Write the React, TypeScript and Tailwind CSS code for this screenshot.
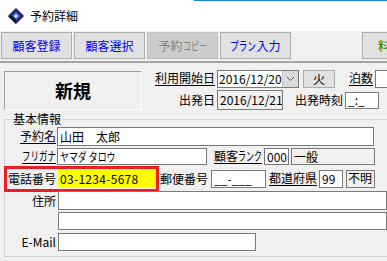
import React from "react";

const F = { fontFamily: '"Noto Sans CJK JP", "Noto Sans", sans-serif' };

function Narrow({ children, w, vw }: { children: React.ReactNode; w: number; vw: number }) {
  return (
    <span className="inline-block whitespace-nowrap origin-left" style={{ transform: `scaleX(${vw / w})`, marginRight: vw - w }}>
      {children}
    </span>
  );
}

function Btn({ children, color, disabled, extra = "" }: { children: React.ReactNode; color?: string; disabled?: boolean; extra?: string }) {
  return (
    <div
      className={`w-[71px] shrink-0 h-[27px] flex items-center justify-center text-[12px] whitespace-nowrap border ${
        disabled ? "bg-[#cccccc] border-[#bfbfbf] text-[#838383]" : "bg-[#e1e1e1] border-[#adadad]"
      } ${extra}`}
      style={color ? { color } : undefined}
    >
      {children}
    </div>
  );
}

function Label({ children, u, w, extra = "" }: { children: React.ReactNode; u?: boolean; w: string; extra?: string }) {
  return (
    <div className={`${w} shrink-0 flex justify-end whitespace-nowrap text-[12px] leading-none text-black ${extra}`}>
      <span className={u ? "border-b border-black pb-[1px]" : ""}>{children}</span>
    </div>
  );
}

function Input({ w, h, children, gray, extra = "" }: { w: string; h: string; children?: React.ReactNode; gray?: boolean; extra?: string }) {
  return (
    <div
      className={`${w} ${h} shrink-0 border border-[#7a7a7a] ${gray ? "bg-[#f0f0f0]" : "bg-white"} flex items-center text-[12px] leading-none text-black overflow-hidden whitespace-nowrap ${extra}`}
    >
      {children}
    </div>
  );
}

export default function App() {
  return (
    <div className="w-[387px] h-[261px] overflow-hidden bg-[#f0f0f0]" style={F}>
      {/* title bar */}
      <div className="h-[31px] bg-white flex flex-col">
        <div className="h-[1px] ml-[194px] bg-[#1883d7]" />
        <div className="flex-1 flex items-center">
          <svg width="18" height="18" viewBox="0 0 18 18" className="ml-[7px]">
            <polygon points="9,1 17,9 9,17 1,9" fill="#1b1b4f" />
            <polygon points="9,4 14,9 9,14 4,9" fill="#2f57c9" />
            <polygon points="9,7 11,9 9,11 7,9" fill="#ffffff" />
            <polygon points="1,9 5,9 9,13 9,17" fill="#0f0f2e" />
          </svg>
          <div className="ml-[5px] text-[12px] text-black">予約詳細</div>
        </div>
      </div>
      {/* toolbar */}
      <div className="h-[32px] flex items-start pt-[1px] pl-[1px] gap-[2px] border-b-2 border-[#a5a5a5]">
        <Btn color="#0000ff">顧客登録</Btn>
        <Btn color="#0000ff">顧客選択</Btn>
        <Btn disabled>予約<Narrow w={36} vw={24}>コピー</Narrow></Btn>
        <Btn color="#0000ff"><Narrow w={36} vw={26}>プラン</Narrow>入力</Btn>
        <Btn color="#008000" extra="ml-[69px] justify-start pl-[15px]">料金</Btn>
      </div>
      {/* top section */}
      <div className="flex pt-[7px]">
        <div className="ml-[4px] mt-[1px] w-[138px] h-[39px] shrink-0 border-t border-l border-[#a0a0a0] border-b border-r border-b-white border-r-white flex items-center justify-center text-[18px] font-bold text-black">
          新規
        </div>
        <div className="ml-[13px] flex flex-col">
          <div className="flex items-center h-[18px]">
            <Label u w="w-[60px]">利用開始日</Label>
            <div className="ml-[2px] w-[82px] h-[18px] shrink-0 border border-[#7a7a7a] bg-white flex">
              <div className="flex-1 pl-[1px] text-[12px] leading-[16px]">2016/12/20</div>
              <div className="w-[17px] h-full bg-[#dadada] border-l border-[#c8c8c8] flex items-center justify-center">
                <svg width="9" height="6" viewBox="0 0 9 6"><polyline points="1,1 4.5,4.5 8,1" fill="none" stroke="#606060" strokeWidth="1" /></svg>
              </div>
            </div>
            <div className="ml-[4px] w-[32px] h-[18px] shrink-0 bg-[#e1e1e1] border border-[#adadad] flex items-center justify-center text-[12px]">火</div>
            <Label u w="w-[24px]" extra="ml-[14px]">泊数</Label>
            <Input w="w-[30px]" h="h-[18px]" extra="ml-[2px]" />
          </div>
          <div className="flex items-center mt-[2px] h-[20px]">
            <Label w="w-[60px]">出発日</Label>
            <Input w="w-[66px]" h="h-[20px]" gray extra="ml-[2px] pl-[2px]">2016/12/21</Input>
            <Label w="w-[48px]" extra="ml-[12px]">出発時刻</Label>
            <Input w="w-[34px]" h="h-[17px]" extra="ml-[2px] pl-[2px]">_:_</Input>
          </div>
        </div>
      </div>
      {/* group box */}
      <fieldset className="ml-[4px] mt-[2px] w-[400px] h-[145px] border border-[#d5d5d5] pl-0">
        <legend className="ml-[7px] px-[1px] text-[12px] leading-[14px] text-black">基本情報</legend>
        <div className="flex flex-col pt-[1px]">
          <div className="flex items-center">
            <Label u w="w-[51px]">予約名</Label>
            <Input w="w-[317px]" h="h-[19px]" extra="ml-[1px] pl-[2px]">山田　太郎</Input>
          </div>
          <div className="flex items-center mt-[2px]">
            <Label u w="w-[51px]"><Narrow w={48} vw={34}>フリガナ</Narrow></Label>
            <Input w="w-[150px]" h="h-[17px]" extra="ml-[1px] pl-[2px]"><Narrow w={78} vw={58}>ヤマダ タロウ</Narrow></Input>
            <Label u w="w-[49px]" extra="ml-[6px]">顧客<Narrow w={36} vw={24}>ランク</Narrow></Label>
            <Input w="w-[25px]" h="h-[17px]" extra="ml-[2px] pl-[2px]">000</Input>
            <Input w="w-[84px]" h="h-[17px]" gray extra="ml-[2px] pl-[2px]">一般</Input>
          </div>
          <div className="flex items-center mt-[1px]">
            <div className="-ml-[1px] w-[155px] h-[26px] shrink-0 border-[3px] border-[#ee1c25] flex items-center">
              <div className="w-[48px] ml-[1px] text-[12px] leading-none text-black whitespace-nowrap">電話番号</div>
              <div className="ml-[2px] flex-1 h-[18px] bg-[#ffff00] flex items-center pl-[2px] text-[12px] leading-none text-black tracking-[0.3px]">03-1234-5678</div>
            </div>
            <Label w="w-[49px]">郵便番号</Label>
            <Input w="w-[55px]" h="h-[18px]" extra="ml-[3px] pl-[2px]">__-___</Input>
            <Label u w="w-[46px]" extra="ml-[5px]">都道府県</Label>
            <Input w="w-[24px]" h="h-[18px]" extra="ml-[2px] pl-[2px]">99</Input>
            <Input w="w-[29px]" h="h-[18px]" gray extra="ml-[3px] items-start pl-[1px] pt-[1px]">不明</Input>
          </div>
          <div className="flex items-center -mt-[1px]">
            <Label w="w-[51px]">住所</Label>
            <Input w="w-[329px]" h="h-[19px]" extra="ml-[2px]" />
          </div>
          <div className="flex items-center mt-[2px]">
            <div className="w-[51px]" />
            <Input w="w-[329px]" h="h-[18px]" extra="ml-[2px]" />
          </div>
          <div className="flex items-center mt-[3px]">
            <Label w="w-[51px]">E-Mail</Label>
            <Input w="w-[198px]" h="h-[18px]" extra="ml-[2px]" />
          </div>
        </div>
      </fieldset>
    </div>
  );
}
